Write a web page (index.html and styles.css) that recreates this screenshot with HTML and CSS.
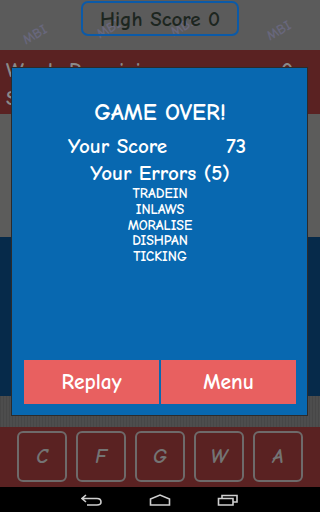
FILE: index.html
```html
<!DOCTYPE html>
<html>
<head>
<meta charset="utf-8">
<link rel="stylesheet" href="styles.css">
</head>
<body>
<div class="app">
  <header class="top">
    <span class="mark m1">MBI</span><span class="mark m2">MBI</span><span class="mark m3">MBI</span><span class="mark m4">MBI</span>
    <div class="hs">High Score 0</div>
  </header>
  <section class="stats">
    <div class="stat"><span>Words Remaining</span><span>0</span></div>
    <div class="stat"><span>Score</span><span>73</span></div>
  </section>
  <section class="board"></section>
  <section class="band"></section>
  <section class="strip"></section>
  <section class="keys">
    <div class="key">C</div>
    <div class="key">F</div>
    <div class="key">G</div>
    <div class="key">W</div>
    <div class="key">A</div>
  </section>
  <nav class="navbar">
    <svg class="nav-ic" width="22" height="12" viewBox="0 0 22 12"><path d="M5 1 L1 4.5 L5 8 M1.5 4.5 H16 Q20 4.5 20 8 Q20 11 16 11 H6" fill="none" stroke="#cfcfcf" stroke-width="1.6"/></svg>
    <svg class="nav-ic" width="22" height="12" viewBox="0 0 22 12"><path d="M1.5 11 V5 L11 1 L20.5 5 V11 Z" fill="none" stroke="#cfcfcf" stroke-width="1.6"/></svg>
    <svg class="nav-ic" width="22" height="12" viewBox="0 0 22 12"><path d="M1.5 4.5 H16 V11 H1.5 Z M5 4.5 V1.5 H20 V8 H16" fill="none" stroke="#cfcfcf" stroke-width="1.6"/></svg>
  </nav>
</div>
<div class="dialog">
  <h1 class="title">GAME OVER!</h1>
  <div class="score-row"><span>Your Score</span><span>73</span></div>
  <div class="errors">Your Errors (5)</div>
  <ul class="words">
    <li>TRADEIN</li>
    <li>INLAWS</li>
    <li>MORALISE</li>
    <li>DISHPAN</li>
    <li>TICKING</li>
  </ul>
  <div class="actions">
    <button class="btn">Replay</button>
    <button class="btn">Menu</button>
  </div>
</div>
</body>
</html>
```
FILE: styles.css
```css
* { box-sizing: border-box; }
html, body { margin: 0; padding: 0; }
body {
  width: 320px;
  height: 512px;
  overflow: hidden;
  position: relative;
  font-family: "Comic Sans MS", "Comic Neue", "DejaVu Sans", sans-serif;
  background: #000;
}
.app {
  display: flex;
  flex-direction: column;
  height: 512px;
}
.top {
  height: 50px;
  background: #5b5b5b;
  display: flex;
  justify-content: center;
  align-items: flex-start;
  padding-top: 1px;
  position: relative;
  overflow: hidden;
}
.mark {
  position: absolute;
  font-size: 14px;
  font-weight: bold;
  color: #68677c;
  transform: rotate(-30deg);
}
.m1 { left: 22px; top: 26px; }
.m2 { left: 96px; top: 20px; }
.m3 { left: 170px; top: 18px; }
.m4 { left: 266px; top: 22px; }
.hs {
  position: relative;
  width: 158px;
  height: 35px;
  border: 2px solid #0b5aa8;
  border-radius: 7px;
  display: flex;
  align-items: center;
  justify-content: center;
  color: #1d2620;
  font-size: 21px;
  font-weight: bold;
}
.stats {
  height: 64px;
  background: #5a2222;
  padding: 6px 5px 0 6px;
  color: #8a8a8a;
  font-size: 21px;
  font-weight: bold;
  line-height: 28px;
}
.stat {
  display: flex;
  justify-content: space-between;
  padding-right: 22px;
}
.board { height: 123px; background: #5c5c5b; }
.band { height: 159px; background: #062a4a; }
.strip {
  height: 31px;
  background: repeating-linear-gradient(90deg, #474747 0 1px, #4d4d4d 1px 3px);
}
.keys {
  height: 60px;
  background: #5a2222;
  display: flex;
  gap: 9px;
  padding: 4px 0 0 17px;
}
.key {
  width: 50px;
  height: 51px;
  border: 2px solid #6e6a6a;
  border-radius: 6px;
  display: flex;
  align-items: center;
  justify-content: center;
  color: #747474;
  font-size: 20px;
  font-weight: bold;
  font-style: italic;
}
.navbar {
  height: 25px;
  background: #000;
  display: flex;
  justify-content: center;
  align-items: center;
  gap: 46px;
}
.dialog {
  position: absolute;
  left: 11px;
  top: 67px;
  width: 297px;
  height: 349px;
  background: #0868b0;
  border: 1px solid #2b2b2b;
  padding: 31px 11px 11px 12px;
  display: flex;
  flex-direction: column;
  align-items: center;
  color: #fff;
}
.title {
  margin: 0;
  font-size: 23.5px;
  font-weight: bold;
  line-height: 28px;
}
.score-row {
  margin-top: 7px;
  width: 178px;
  display: flex;
  justify-content: space-between;
  font-size: 21px;
  font-weight: bold;
  line-height: 25px;
  transform: translateX(-3px);
}
.errors {
  margin-top: 2px;
  font-size: 21px;
  font-weight: bold;
  line-height: 25px;
}
.words {
  list-style: none;
  margin: 0;
  padding: 0;
  text-align: center;
  font-size: 14px;
  font-weight: bold;
  line-height: 15.75px;
}
.actions {
  margin-top: auto;
  display: flex;
  gap: 2px;
  width: 100%;
}
.btn {
  flex: 1;
  height: 44px;
  border: 0;
  background: #e86060;
  color: #fff;
  font-family: inherit;
  font-size: 21.5px;
  font-weight: bold;
  padding: 0;
}
```
